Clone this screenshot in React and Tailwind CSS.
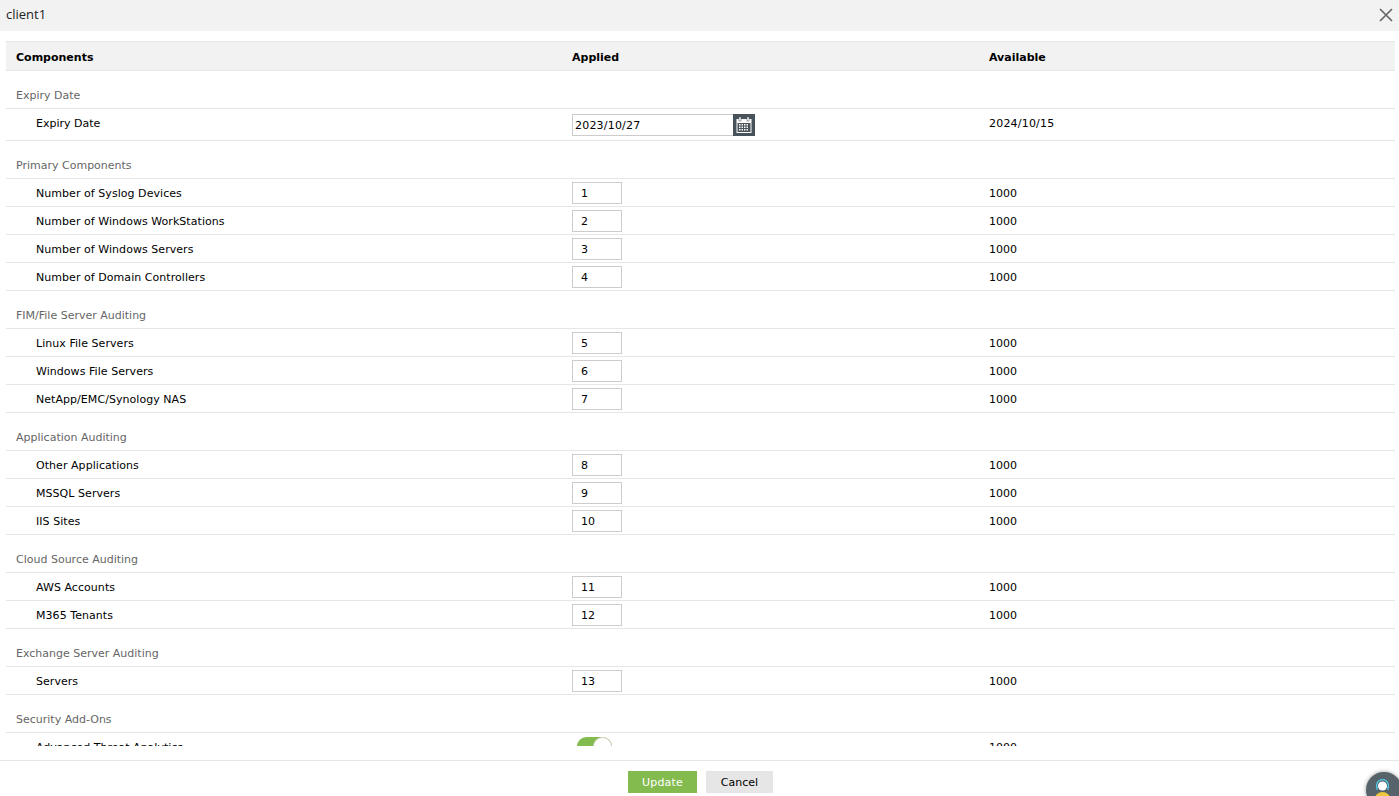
const GRID = "grid grid-cols-[566px_417px_1fr] border-b border-[#e6e6e6]";

const sections = [
  { title: "Primary Components", items: [["Number of Syslog Devices", 1], ["Number of Windows WorkStations", 2], ["Number of Windows Servers", 3], ["Number of Domain Controllers", 4]] },
  { title: "FIM/File Server Auditing", items: [["Linux File Servers", 5], ["Windows File Servers", 6], ["NetApp/EMC/Synology NAS", 7]] },
  { title: "Application Auditing", items: [["Other Applications", 8], ["MSSQL Servers", 9], ["IIS Sites", 10]] },
  { title: "Cloud Source Auditing", items: [["AWS Accounts", 11], ["M365 Tenants", 12]] },
  { title: "Exchange Server Auditing", items: [["Servers", 13]] },
];

function SectionRow({ title }) {
  return (
    <div className="h-[38px] flex items-end pb-[5px] pl-[10px] border-b border-[#e6e6e6] text-[#666666]">
      <span className="leading-[14px]">{title}</span>
    </div>
  );
}

function ItemRow({ label, value }) {
  return (
    <div className={`${GRID} h-[28px] items-center`}>
      <div className="pl-[30px] pt-[4px] text-black tracking-[0.05px]">{label}</div>
      <div>
        <input
          readOnly
          value={value}
          className="block w-[50px] h-[22px] border border-[#cccccc] pl-[8px] pt-[2px] text-black outline-none"
        />
      </div>
      <div className="pt-[4px] text-black">1000</div>
    </div>
  );
}

function CalendarIcon() {
  return (
    <svg width="16" height="16" viewBox="0 0 16 16" fill="none">
      <rect x="0.5" y="2" width="15" height="14" fill="#ffffff" />
      <rect x="1.5" y="6" width="13" height="9" fill="#47525a" />
      <rect x="3" y="0" width="2" height="4" fill="#ffffff" stroke="#47525a" strokeWidth="0.5" />
      <rect x="11" y="0" width="2" height="4" fill="#ffffff" stroke="#47525a" strokeWidth="0.5" />
      <g fill="#ffffff">
        <rect x="3" y="7" width="1.5" height="1.5" />
        <rect x="5.5" y="7" width="1.5" height="1.5" />
        <rect x="8" y="7" width="1.5" height="1.5" />
        <rect x="10.5" y="7" width="1.5" height="1.5" />
        <rect x="3" y="9.5" width="1.5" height="1.5" />
        <rect x="5.5" y="9.5" width="1.5" height="1.5" />
        <rect x="8" y="9.5" width="1.5" height="1.5" />
        <rect x="10.5" y="9.5" width="1.5" height="1.5" />
        <rect x="3" y="12" width="1.5" height="1.5" />
        <rect x="5.5" y="12" width="1.5" height="1.5" />
        <rect x="8" y="12" width="1.5" height="1.5" />
        <rect x="10.5" y="12" width="1.5" height="1.5" />
      </g>
    </svg>
  );
}

export default function App() {
  return (
    <div className="relative h-[796px] w-[1399px] overflow-hidden bg-white font-['DejaVu_Sans',Verdana,sans-serif] text-[11px]">
      <div className="h-[31px] bg-[#f2f2f2] flex items-center justify-between pl-[6px] pr-[6px] pb-[2px]">
        <span className="font-['Open_Sans',sans-serif] text-[13px] text-[#222222]">client1</span>
        <svg width="14" height="14" viewBox="0 0 14 14" fill="none" stroke="#666666" strokeWidth="1.7">
          <path d="M1 1 L13 13 M13 1 L1 13" />
        </svg>
      </div>

      <div className="mt-[10px] ml-[6px] mr-[4px] h-[705px] overflow-hidden">
        <div className={`${GRID} h-[30px] items-center bg-[#f2f2f2] border-t font-bold text-black`}>
          <div className="pl-[10px] pt-[4px]">Components</div>
          <div className="pt-[4px]">Applied</div>
          <div className="pt-[4px]">Available</div>
        </div>

        <SectionRow title="Expiry Date" />
        <div className={`${GRID} h-[32px]`}>
          <div className="pl-[30px] pt-[8px] text-black leading-[14px]">Expiry Date</div>
          <div className="pt-[5px] flex items-start">
            <input
              readOnly
              value="2023/10/27"
              className="block w-[161px] h-[22px] border border-r-0 border-[#cccccc] pl-[2px] tracking-[0.2px] text-black outline-none"
            />
            <div className="w-[22px] h-[22px] bg-[#47525a] flex items-center justify-center">
              <CalendarIcon />
            </div>
          </div>
          <div className="pt-[8px] text-black leading-[14px] tracking-[0.2px]">2024/10/15</div>
        </div>

        {sections.map((s) => (
          <div key={s.title}>
            <SectionRow title={s.title} />
            {s.items.map(([label, value]) => (
              <ItemRow key={label} label={label} value={value} />
            ))}
          </div>
        ))}

        <SectionRow title="Security Add-Ons" />
        <div className={`${GRID} h-[28px] items-center`}>
          <div className="pl-[30px] pt-[4px] text-black">Advanced Threat Analytics</div>
          <div className="pl-[5px]">
            <div className="relative w-[35px] h-[19px] rounded-full bg-[#84bb4f]">
              <div className="absolute right-0 top-0 w-[19px] h-[19px] rounded-full bg-white border border-[#d8d8d0]" />
            </div>
          </div>
          <div className="pt-[4px] text-black">1000</div>
        </div>
      </div>

      <div className="mt-[14px] border-t border-[#e6e6e6] pt-[10px] pl-[2px] flex justify-center gap-[9px]">
        <button className="w-[69px] h-[22px] pt-[2px] bg-[#84bb4f] text-white text-[11px] tracking-[0.2px]">Update</button>
        <button className="w-[67px] h-[22px] pt-[2px] bg-[#e6e6e6] text-black text-[11px]">Cancel</button>
      </div>

      <div className="absolute left-[1366px] top-[772px] w-[36px] h-[36px] rounded-full bg-[#56636b] shadow-[0_0_4px_rgba(0,0,0,0.4)] overflow-hidden">
        <svg width="36" height="36" viewBox="0 0 36 36" fill="none">
          <circle cx="16.5" cy="28" r="8" fill="#f0c93a" />
          <circle cx="16.5" cy="14" r="4.5" fill="#ffffff" />
          <path d="M11 16 A6 6 0 1 1 22 16" stroke="#4fd0ea" strokeWidth="1.2" />
          <path d="M11 15 V18 M22 15 V18" stroke="#4fd0ea" strokeWidth="1.2" />
        </svg>
      </div>
    </div>
  );
}
